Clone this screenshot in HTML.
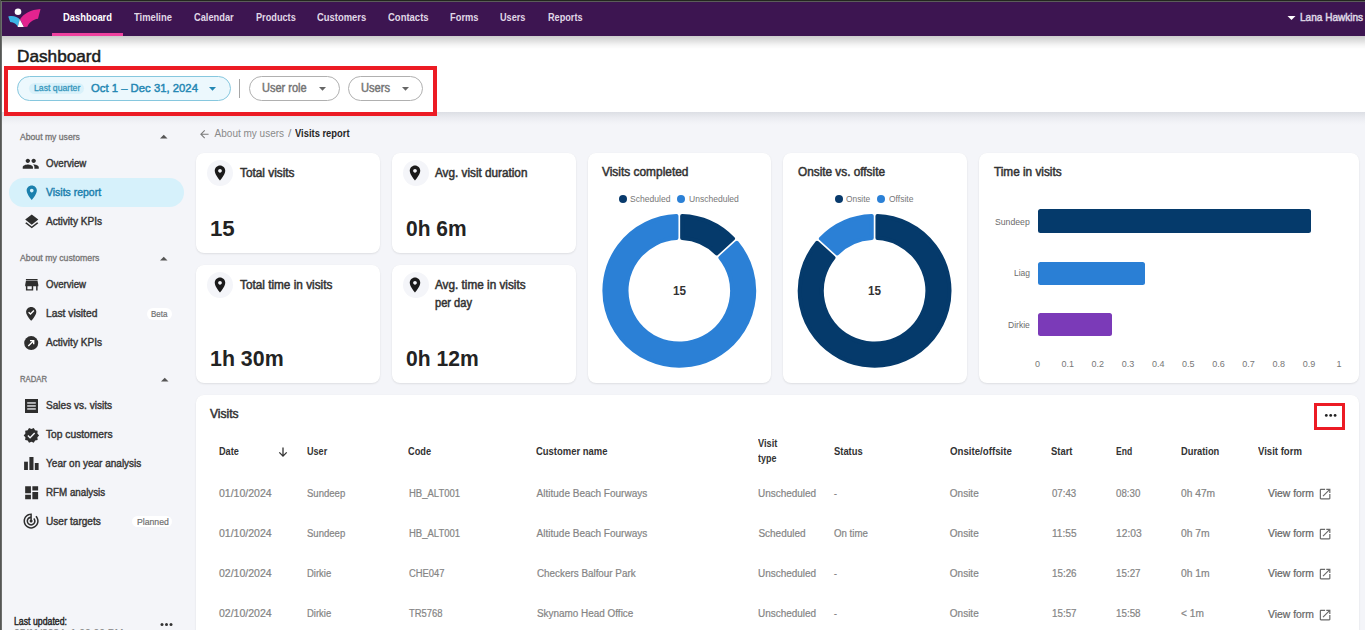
<!DOCTYPE html>
<html><head><meta charset="utf-8">
<style>
*{box-sizing:border-box;margin:0;padding:0}
html,body{width:1365px;height:630px;overflow:hidden}
body{position:relative;background:#f4f5f9;font-family:"Liberation Sans",sans-serif;color:#222}
.a{position:absolute}
.tx{position:absolute;white-space:nowrap;line-height:normal;transform-origin:0 0;z-index:20}
.card{position:absolute;background:#fff;border-radius:8px;box-shadow:0 1px 2px rgba(0,0,0,.09),0 0 1px rgba(0,0,0,.04)}
.circ{position:absolute;width:26px;height:26px;border-radius:50%;background:#f4f5f9}
.ic{position:absolute;z-index:21}
.pill{position:absolute;top:76px;height:25px;border-radius:13px;border:1.2px solid #b0b0b0;background:#fff;z-index:3}
svg{display:block}
</style></head><body>
<!-- frame borders -->
<div class="a" style="left:0;top:0;width:1365px;height:1px;background:#23261f;z-index:60"></div>
<div class="a" style="left:0;top:1px;width:1365px;height:1px;background:#5b5d59;z-index:60"></div>
<div class="a" style="left:0;top:0;width:1px;height:630px;background:#555654;z-index:61"></div>
<div class="a" style="left:1px;top:1px;width:1px;height:629px;background:#6b6d6b;z-index:61"></div>

<!-- header -->
<div class="a" style="left:2px;top:2px;width:1363px;height:34px;background:#3d1551;z-index:5"></div>
<div class="a" style="left:52px;top:33px;width:71px;height:3px;background:#f0409f;z-index:6"></div>
<svg class="a" style="left:4px;top:4px;z-index:6" width="40" height="28" viewBox="0 0 900 630">
 <circle cx="315" cy="175" r="75" fill="#ffffff"/>
 <path d="M95,280 C200,250 300,285 355,345 L310,512 C285,455 225,410 140,405 Z" fill="#3db5e6"/>
 <path d="M360,345 C450,215 600,130 822,115 L765,330 C650,345 565,415 525,512 L450,520 Z" fill="#e3238f"/>
 <path d="M355,345 L308,515 L447,515 Z" fill="#ffffff"/>
</svg>
<svg class="a" style="left:1287px;top:15px;z-index:6" width="9" height="6" viewBox="0 0 9 6"><path d="M0.5,1 L8.5,1 L4.5,5 Z" fill="#fff"/></svg>

<!-- white page header -->
<div class="a" style="left:2px;top:36px;width:1363px;height:76px;background:#fff;z-index:2"></div>
<div class="a" style="left:2px;top:36px;width:1363px;height:13px;background:linear-gradient(rgba(0,0,0,.20),rgba(0,0,0,.11) 40%,rgba(0,0,0,.04) 70%,rgba(0,0,0,0));z-index:4"></div>
<div class="a" style="left:2px;top:112px;width:1363px;height:13px;background:linear-gradient(rgba(30,40,60,.11),rgba(30,40,60,.05) 40%,rgba(30,40,60,.015) 75%,rgba(0,0,0,0));z-index:1"></div>
<div class="pill" style="left:17px;width:214px;border-color:#86c7de;background:#ecf8fd"></div>
<div class="a" style="left:29px;top:83px;width:55px;height:11px;border-radius:6px;background:#d9f1fa;z-index:4"></div>
<svg class="a" style="left:208px;top:86px;z-index:4" width="9" height="6" viewBox="0 0 9 6"><path d="M1,1 L8,1 L4.5,4.8 Z" fill="#2387b3"/></svg>
<div class="a" style="left:239.2px;top:78.5px;width:1.2px;height:19.5px;background:#a6a6a6;z-index:4"></div>
<div class="pill" style="left:249px;width:91px"></div>
<svg class="a" style="left:318px;top:86px;z-index:4" width="9" height="6" viewBox="0 0 9 6"><path d="M1,1 L8,1 L4.5,4.8 Z" fill="#666"/></svg>
<div class="pill" style="left:348px;width:75px"></div>
<svg class="a" style="left:400.5px;top:86px;z-index:4" width="9" height="6" viewBox="0 0 9 6"><path d="M1,1 L8,1 L4.5,4.8 Z" fill="#666"/></svg>
<div class="a" style="left:4px;top:66px;width:433px;height:50px;border:4px solid #ec1b24;z-index:30"></div>

<!-- sidebar -->
<div class="a" style="left:9px;top:178px;width:175px;height:29px;border-radius:15px;background:#d6f1fb"></div>
<svg class="a" style="left:160px;top:134px" width="8" height="5" viewBox="0 0 8 5"><path d="M0,4.5 L7.5,4.5 L3.75,0.8 Z" fill="#555"/></svg>
<svg class="a" style="left:160px;top:255.5px" width="8" height="5" viewBox="0 0 8 5"><path d="M0,4.5 L7.5,4.5 L3.75,0.8 Z" fill="#555"/></svg>
<svg class="a" style="left:160.5px;top:376.5px" width="8" height="5" viewBox="0 0 8 5"><path d="M0,4.5 L7.5,4.5 L3.75,0.8 Z" fill="#555"/></svg>
<div class="a" style="left:147px;top:308px;width:25px;height:12px;border-radius:6px;background:#fff"></div>
<div class="a" style="left:132px;top:516px;width:40px;height:11px;border-radius:6px;background:#fff"></div>
<svg class="a" style="left:160px;top:622px" width="14" height="5" viewBox="0 0 14 5"><circle cx="2" cy="2.5" r="1.5" fill="#333"/><circle cx="6.5" cy="2.5" r="1.5" fill="#333"/><circle cx="11" cy="2.5" r="1.5" fill="#333"/></svg>
<!-- sidebar icons -->
<svg class="ic" style="left:22.4px;top:155.2px" width="17.5" height="17.5" viewBox="0 0 24 24"><path fill="#2e2e2e" d="M16 11c1.66 0 2.99-1.34 2.99-3S17.66 5 16 5c-1.66 0-3 1.34-3 3s1.34 3 3 3zm-8 0c1.66 0 2.99-1.34 2.99-3S9.66 5 8 5C6.34 5 5 6.34 5 8s1.340 3 3 3zm0 2c-2.33 0-7 1.17-7 3.5V19h14v-2.5c0-2.33-4.67-3.5-7-3.5zm8 0c-.29 0-.62.02-.97.05 1.16.84 1.970 1.97 1.97 3.45V19h6v-2.5c0-2.33-4.67-3.5-7-3.5z"/></svg>
<svg class="ic" style="left:22.55px;top:184.3px" width="17.5" height="17.5" viewBox="0 0 24 24"><path fill="#1b80ad" d="M12 2C8.13 2 5 5.13 5 9c0 5.25 7 13 7 13s7-7.75 7-13c0-3.87-3.13-7-7-7zm0 9.5c-1.38 0-2.5-1.12-2.5-2.5s1.12-2.5 2.5-2.5 2.5 1.12 2.5 2.5-1.12 2.5-2.5 2.5z"/></svg>
<svg class="ic" style="left:22.6px;top:213px" width="17.5" height="17.5" viewBox="0 0 24 24"><path fill="#2e2e2e" d="M11.99 18.54l-7.37-5.730L3 14.07l9 7 9-7-1.63-1.27-7.38 5.74zM12 16l7.36-5.73L21 9l-9-7-9 7 1.63 1.27L12 16z"/></svg>
<svg class="ic" style="left:22.6px;top:276.1px" width="17.5" height="17.5" viewBox="0 0 24 24"><path fill="#2e2e2e" d="M20 4H4v2h16V4zm1 10v-2l-1-5H4l-1 5v2h1v6h10v-6h4v6h2v-6h1zm-9 4H6v-4h6v4z"/></svg>
<svg class="ic" style="left:24px;top:305px" width="15" height="18" viewBox="0 0 15 18"><path fill="#2e2e2e" d="M7.2,2 C4.3,2 2.1,4.2 2.1,7 C2.1,10.5 7.2,15.8 7.2,15.8 C7.2,15.8 12.3,10.5 12.3,7 C12.3,4.2 10.1,2 7.2,2 Z"/><path d="M4.6,7.2 L6.5,9 L9.9,5.6" stroke="#fff" stroke-width="1.4" fill="none"/></svg>
<svg class="ic" style="left:24px;top:335.5px" width="15" height="15" viewBox="0 0 15 15"><circle cx="7.2" cy="7.1" r="7" fill="#2e2e2e"/><path d="M4.3,10 L9.6,4.7 M6,4.6 L9.7,4.6 L9.7,8.3" stroke="#fff" stroke-width="1.4" fill="none"/></svg>
<svg class="ic" style="left:25px;top:399.2px" width="13" height="14" viewBox="0 0 13 14"><rect x="0" y="0" width="13" height="14" fill="#2e2e2e"/><rect x="2.2" y="3.3" width="8.6" height="1.3" fill="#f3f4f8"/><rect x="2.2" y="6.3" width="8.6" height="1.3" fill="#f3f4f8"/><rect x="2.2" y="9.3" width="8.6" height="1.3" fill="#f3f4f8"/></svg>
<svg class="ic" style="left:22.9px;top:426.6px" width="16.8" height="16.8" viewBox="0 0 24 24"><path fill="#2e2e2e" d="M23 12l-2.44-2.79.34-3.69-3.61-.82-1.89-3.2L12 2.96 8.6 1.5 6.71 4.69 3.1 5.5l.34 3.7L1 12l2.44 2.79-.34 3.7 3.61.82L8.6 22.5l3.4-1.47 3.4 1.46 1.89-3.19 3.61-.82-.34-3.69L23 12zm-12.91 4.72l-3.8-3.81 1.48-1.48 2.32 2.33 5.85-5.87 1.48 1.48-7.330 7.35z"/></svg>
<svg class="ic" style="left:24px;top:457px" width="15" height="13" viewBox="0 0 15 13"><rect x="0.1" y="4.7" width="3.8" height="8.3" fill="#2e2e2e"/><rect x="5.4" y="0" width="4.1" height="13" fill="#2e2e2e"/><rect x="10.8" y="6" width="3.8" height="7" fill="#2e2e2e"/></svg>
<svg class="ic" style="left:22.6px;top:484.2px" width="17.3" height="17.3" viewBox="0 0 24 24"><path fill="#2e2e2e" d="M3 13h8V3H3v10zm0 8h8v-6H3v6zm10 0h8V11h-8v10zm0-18v6h8V3h-8z"/></svg>
<svg class="ic" style="left:22.3px;top:512.2px" width="18.2" height="18.2" viewBox="0 0 24 24"><path fill="#2e2e2e" d="M19.07 4.93l-1.41 1.41C19.1 7.79 20 9.79 20 12c0 4.42-3.58 8-8 8s-8-3.58-8-8c0-4.08 3.050-7.44 7-7.93v2.02C8.16 6.57 6 9.03 6 12c0 3.31 2.69 6 6 6s6-2.690 6-6c0-1.66-.67-3.16-1.76-4.24l-1.41 1.41C15.55 9.9 16 10.9 16 12c0 2.21-1.79 4-4 4s-4-1.79-4-4c0-1.86 1.28-3.41 3-3.86v2.14c-.6.35-1 .98-1 1.72 0 1.1.9 2 2 2s2-.9 2-2c0-.74-.4-1.38-1-1.72V2h-1C6.48 2 2 6.48 2 12s4.48 10 10 10 10-4.48 10-10c0-2.76-1.12-5.26-2.93-7.07z"/></svg>

<!-- breadcrumb arrow -->
<svg class="ic" style="left:198.3px;top:127.8px" width="12.7" height="12.7" viewBox="0 0 24 24"><path fill="#7a7a7a" d="M20 11H7.83l5.59-5.59L12 4l-8 8 8 8 1.41-1.41L7.83 13H20v-2z"/></svg>

<!-- cards -->
<div class="card" style="left:196px;top:153px;width:184px;height:100px"></div>
<div class="card" style="left:392px;top:153px;width:184px;height:100px"></div>
<div class="card" style="left:196px;top:265px;width:184px;height:117.5px"></div>
<div class="card" style="left:392px;top:265px;width:184px;height:117.5px"></div>
<div class="card" style="left:588px;top:153px;width:183px;height:229.5px"></div>
<div class="card" style="left:783px;top:153px;width:184px;height:229.5px"></div>
<div class="card" style="left:979px;top:153px;width:380px;height:229.5px"></div>
<div class="card" style="left:196px;top:395px;width:1163px;height:260px"></div>

<div class="circ" style="left:207px;top:160px"></div>
<div class="circ" style="left:403px;top:160px"></div>
<div class="circ" style="left:207px;top:272px"></div>
<div class="circ" style="left:403px;top:272px"></div>
<svg class="ic" style="left:210.55px;top:163.6px" width="18" height="18" viewBox="0 0 24 24"><path fill="#1a1a1a" d="M12 2C8.13 2 5 5.13 5 9c0 5.25 7 13 7 13s7-7.75 7-13c0-3.87-3.13-7-7-7zm0 9.5c-1.38 0-2.5-1.12-2.5-2.5s1.12-2.5 2.5-2.5 2.5 1.12 2.5 2.5-1.12 2.5-2.5 2.5z"/></svg><svg class="ic" style="left:406.3px;top:163.6px" width="18" height="18" viewBox="0 0 24 24"><path fill="#1a1a1a" d="M12 2C8.13 2 5 5.13 5 9c0 5.25 7 13 7 13s7-7.75 7-13c0-3.87-3.13-7-7-7zm0 9.5c-1.38 0-2.5-1.12-2.5-2.5s1.12-2.5 2.5-2.5 2.5 1.12 2.5 2.5-1.12 2.5-2.5 2.5z"/></svg><svg class="ic" style="left:210.55px;top:275.8px" width="18" height="18" viewBox="0 0 24 24"><path fill="#1a1a1a" d="M12 2C8.13 2 5 5.13 5 9c0 5.25 7 13 7 13s7-7.75 7-13c0-3.87-3.13-7-7-7zm0 9.5c-1.38 0-2.5-1.12-2.5-2.5s1.12-2.5 2.5-2.5 2.5 1.12 2.5 2.5-1.12 2.5-2.5 2.5z"/></svg><svg class="ic" style="left:406.3px;top:275.8px" width="18" height="18" viewBox="0 0 24 24"><path fill="#1a1a1a" d="M12 2C8.13 2 5 5.13 5 9c0 5.25 7 13 7 13s7-7.75 7-13c0-3.87-3.13-7-7-7zm0 9.5c-1.38 0-2.5-1.12-2.5-2.5s1.12-2.5 2.5-2.5 2.5 1.12 2.5 2.5-1.12 2.5-2.5 2.5z"/></svg>
<svg class="a" style="left:590px;top:205px;z-index:5" width="380" height="175"><path d="M92.15,10.95 A74.90,74.90 0 0 1 143.01,33.60 L126.57,48.40 A52.80,52.80 0 0 0 92.15,33.08 Z" fill="#053a6b" stroke="#053a6b" stroke-width="4.0" stroke-linejoin="round"/><path d="M146.83,37.84 A74.90,74.90 0 1 1 86.45,10.95 L86.45,33.08 A52.80,52.80 0 1 0 130.39,52.64 Z" fill="#2b80d6" stroke="#2b80d6" stroke-width="4.0" stroke-linejoin="round"/><path d="M287.45,10.95 A74.90,74.90 0 1 1 227.07,37.84 L243.51,52.64 A52.80,52.80 0 1 0 287.45,33.08 Z" fill="#053a6b" stroke="#053a6b" stroke-width="4.0" stroke-linejoin="round"/><path d="M230.89,33.60 A74.90,74.90 0 0 1 281.75,10.95 L281.75,33.08 A52.80,52.80 0 0 0 247.33,48.40 Z" fill="#2b80d6" stroke="#2b80d6" stroke-width="4.0" stroke-linejoin="round"/></svg>

<!-- legend dots -->
<div class="a" style="left:618.7px;top:195.2px;width:8px;height:8px;border-radius:50%;background:#083a6c;z-index:5"></div>
<div class="a" style="left:676.7px;top:195.2px;width:8px;height:8px;border-radius:50%;background:#2b80d6;z-index:5"></div>
<div class="a" style="left:834.8px;top:195.2px;width:8px;height:8px;border-radius:50%;background:#083a6c;z-index:5"></div>
<div class="a" style="left:877px;top:195.2px;width:8px;height:8px;border-radius:50%;background:#2b80d6;z-index:5"></div>

<!-- bars -->
<div class="a" style="left:1038.3px;top:209.3px;width:273px;height:23.4px;border-radius:2.5px;background:#053a6b;z-index:5"></div>
<div class="a" style="left:1038.3px;top:261.5px;width:107.2px;height:23.2px;border-radius:2.5px;background:#2a7fd5;z-index:5"></div>
<div class="a" style="left:1038.4px;top:313.4px;width:73.6px;height:23.1px;border-radius:2.5px;background:#7b3ab8;z-index:5"></div>

<!-- visits card extras -->
<div class="a" style="left:1314px;top:403px;width:31px;height:26.5px;border:3px solid #ec1b24;z-index:30"></div>
<svg class="a" style="left:1323.5px;top:412.5px;z-index:31" width="14" height="5" viewBox="0 0 14 5"><circle cx="2.3" cy="2.4" r="1.4" fill="#222"/><circle cx="6.7" cy="2.4" r="1.4" fill="#222"/><circle cx="11.1" cy="2.4" r="1.4" fill="#222"/></svg>
<svg class="ic" style="left:276.5px;top:445.5px" width="12" height="12" viewBox="0 0 12 12"><path d="M6,1.5 L6,10 M2.3,6.4 L6,10.1 L9.7,6.4" stroke="#333" stroke-width="1.3" fill="none"/></svg>
<svg class="ic" style="left:1318px;top:487.0px" width="14.2" height="14.2" viewBox="0 0 24 24"><path fill="#6a6a6a" d="M19 19H5V5h7V3H5c-1.11 0-2 .9-2 2v14c0 1.1.89 2 2 2h14c1.1 0 2-.9 2-2v-7h-2v7zM14 3v2h3.59l-9.83 9.83 1.41 1.41L19 6.41V10h2V3h-7z"/></svg><svg class="ic" style="left:1318px;top:527.2px" width="14.2" height="14.2" viewBox="0 0 24 24"><path fill="#6a6a6a" d="M19 19H5V5h7V3H5c-1.11 0-2 .9-2 2v14c0 1.1.89 2 2 2h14c1.1 0 2-.9 2-2v-7h-2v7zM14 3v2h3.59l-9.83 9.83 1.41 1.41L19 6.41V10h2V3h-7z"/></svg><svg class="ic" style="left:1318px;top:567.4px" width="14.2" height="14.2" viewBox="0 0 24 24"><path fill="#6a6a6a" d="M19 19H5V5h7V3H5c-1.11 0-2 .9-2 2v14c0 1.1.89 2 2 2h14c1.1 0 2-.9 2-2v-7h-2v7zM14 3v2h3.59l-9.83 9.83 1.41 1.41L19 6.41V10h2V3h-7z"/></svg><svg class="ic" style="left:1318px;top:607.6px" width="14.2" height="14.2" viewBox="0 0 24 24"><path fill="#6a6a6a" d="M19 19H5V5h7V3H5c-1.11 0-2 .9-2 2v14c0 1.1.89 2 2 2h14c1.1 0 2-.9 2-2v-7h-2v7zM14 3v2h3.59l-9.83 9.83 1.41 1.41L19 6.41V10h2V3h-7z"/></svg>

<div class="tx" style="left:63.40px;top:10.70px;font-size:10.5px;font-weight:bold;color:#ffffff;transform:scaleX(0.893);">Dashboard</div>
<div class="tx" style="left:133.90px;top:10.70px;font-size:10.5px;font-weight:bold;color:#e0d8e7;transform:scaleX(0.895);">Timeline</div>
<div class="tx" style="left:194.00px;top:10.70px;font-size:10.5px;font-weight:bold;color:#e0d8e7;transform:scaleX(0.883);">Calendar</div>
<div class="tx" style="left:255.50px;top:10.70px;font-size:10.5px;font-weight:bold;color:#e0d8e7;transform:scaleX(0.874);">Products</div>
<div class="tx" style="left:317.10px;top:10.70px;font-size:10.5px;font-weight:bold;color:#e0d8e7;transform:scaleX(0.896);">Customers</div>
<div class="tx" style="left:387.90px;top:10.70px;font-size:10.5px;font-weight:bold;color:#e0d8e7;transform:scaleX(0.903);">Contacts</div>
<div class="tx" style="left:450.10px;top:10.70px;font-size:10.5px;font-weight:bold;color:#e0d8e7;transform:scaleX(0.887);">Forms</div>
<div class="tx" style="left:500.40px;top:10.70px;font-size:10.5px;font-weight:bold;color:#e0d8e7;transform:scaleX(0.872);">Users</div>
<div class="tx" style="left:547.70px;top:10.70px;font-size:10.5px;font-weight:bold;color:#e0d8e7;transform:scaleX(0.871);">Reports</div>
<div class="tx" style="left:1300.20px;top:10.70px;font-size:10.5px;font-weight:normal;color:#ddd5e3;-webkit-text-stroke:0.5px #ddd5e3;transform:scaleX(0.957);">Lana Hawkins</div>
<div class="tx" style="left:16.89px;top:46.60px;font-size:17px;font-weight:normal;color:#1c1c1c;-webkit-text-stroke:0.5px #1c1c1c;transform:scaleX(1.012);">Dashboard</div>
<div class="tx" style="left:33.60px;top:82.30px;font-size:9.5px;font-weight:normal;color:#3797bd;-webkit-text-stroke:0.3px #3797bd;transform:scaleX(0.914);">Last quarter</div>
<div class="tx" style="left:90.90px;top:80.90px;font-size:11.6px;font-weight:normal;color:#2387b3;-webkit-text-stroke:0.45px #2387b3;transform:scaleX(0.976);">Oct 1 – Dec 31, 2024</div>
<div class="tx" style="left:261.70px;top:80.90px;font-size:12px;font-weight:normal;color:#747474;-webkit-text-stroke:0.45px #747474;transform:scaleX(0.918);">User role</div>
<div class="tx" style="left:360.60px;top:80.90px;font-size:12px;font-weight:normal;color:#747474;-webkit-text-stroke:0.45px #747474;transform:scaleX(0.929);">Users</div>
<div class="tx" style="left:20.00px;top:131.70px;font-size:9px;font-weight:normal;color:#747474;-webkit-text-stroke:0.3px #747474;transform:scaleX(0.958);">About my users</div>
<div class="tx" style="left:45.80px;top:158.10px;font-size:10px;font-weight:normal;color:#363636;-webkit-text-stroke:0.4px #363636;transform:scaleX(0.966);">Overview</div>
<div class="tx" style="left:45.80px;top:186.90px;font-size:10px;font-weight:normal;color:#1b80ad;-webkit-text-stroke:0.4px #1b80ad;transform:scaleX(1.047);">Visits report</div>
<div class="tx" style="left:46.40px;top:215.60px;font-size:10px;font-weight:normal;color:#363636;-webkit-text-stroke:0.4px #363636;transform:scaleX(1.008);">Activity KPIs</div>
<div class="tx" style="left:20.00px;top:253.10px;font-size:9px;font-weight:normal;color:#747474;-webkit-text-stroke:0.3px #747474;transform:scaleX(0.969);">About my customers</div>
<div class="tx" style="left:46.10px;top:279.10px;font-size:10px;font-weight:normal;color:#363636;-webkit-text-stroke:0.4px #363636;transform:scaleX(0.959);">Overview</div>
<div class="tx" style="left:46.10px;top:307.90px;font-size:10px;font-weight:normal;color:#363636;-webkit-text-stroke:0.4px #363636;transform:scaleX(1.027);">Last visited</div>
<div class="tx" style="left:151.00px;top:307.90px;font-size:9.6px;font-weight:normal;color:#6f6f6f;-webkit-text-stroke:0.2px #6f6f6f;transform:scaleX(0.833);">Beta</div>
<div class="tx" style="left:46.10px;top:336.90px;font-size:10px;font-weight:normal;color:#363636;-webkit-text-stroke:0.4px #363636;transform:scaleX(1.008);">Activity KPIs</div>
<div class="tx" style="left:20.00px;top:374.00px;font-size:9px;font-weight:normal;color:#747474;-webkit-text-stroke:0.3px #747474;transform:scaleX(0.859);">RADAR</div>
<div class="tx" style="left:46.10px;top:400.00px;font-size:10px;font-weight:normal;color:#363636;-webkit-text-stroke:0.4px #363636;transform:scaleX(1.007);">Sales vs. visits</div>
<div class="tx" style="left:46.10px;top:428.80px;font-size:10px;font-weight:normal;color:#363636;-webkit-text-stroke:0.4px #363636;transform:scaleX(1.023);">Top customers</div>
<div class="tx" style="left:46.10px;top:457.60px;font-size:10px;font-weight:normal;color:#363636;-webkit-text-stroke:0.4px #363636;">Year on year analysis</div>
<div class="tx" style="left:46.00px;top:487.10px;font-size:10px;font-weight:normal;color:#363636;-webkit-text-stroke:0.4px #363636;transform:scaleX(0.977);">RFM analysis</div>
<div class="tx" style="left:46.00px;top:515.60px;font-size:10px;font-weight:normal;color:#363636;-webkit-text-stroke:0.4px #363636;transform:scaleX(1.006);">User targets</div>
<div class="tx" style="left:136.50px;top:515.60px;font-size:9.6px;font-weight:normal;color:#6f6f6f;-webkit-text-stroke:0.2px #6f6f6f;transform:scaleX(0.903);">Planned</div>
<div class="tx" style="left:14.20px;top:616.20px;font-size:10px;font-weight:normal;color:#222222;-webkit-text-stroke:0.4px #222222;transform:scaleX(0.874);">Last updated:</div>
<div class="tx" style="left:14.20px;top:627.60px;font-size:10px;font-weight:normal;color:#8a8a8a;-webkit-text-stroke:0.2px #8a8a8a;transform:scaleX(1.031);">05/11/2024, 1:00:00 PM</div>
<div class="tx" style="left:214.60px;top:127.80px;font-size:10px;font-weight:normal;color:#8a8a8a;">About my users</div>
<div class="tx" style="left:287.50px;top:127.80px;font-size:10px;font-weight:normal;color:#8a8a8a;transform:scaleX(1.200);">/</div>
<div class="tx" style="left:294.80px;top:127.80px;font-size:10px;font-weight:bold;color:#262626;transform:scaleX(0.938);">Visits report</div>
<div class="tx" style="left:239.80px;top:165.50px;font-size:12px;font-weight:normal;color:#333333;-webkit-text-stroke:0.5px #333333;transform:scaleX(0.985);">Total visits</div>
<div class="tx" style="left:209.99px;top:216.10px;font-size:22px;font-weight:bold;color:#232323;transform:scaleX(1.011);">15</div>
<div class="tx" style="left:434.90px;top:165.70px;font-size:12px;font-weight:normal;color:#333333;-webkit-text-stroke:0.5px #333333;transform:scaleX(0.978);">Avg. visit duration</div>
<div class="tx" style="left:406.20px;top:216.00px;font-size:22px;font-weight:bold;color:#232323;transform:scaleX(0.952);">0h 6m</div>
<div class="tx" style="left:239.60px;top:278.10px;font-size:12px;font-weight:normal;color:#333333;-webkit-text-stroke:0.5px #333333;transform:scaleX(0.982);">Total time in visits</div>
<div class="tx" style="left:210.03px;top:346.20px;font-size:22px;font-weight:bold;color:#232323;transform:scaleX(0.971);">1h 30m</div>
<div class="tx" style="left:434.80px;top:278.10px;font-size:12px;font-weight:normal;color:#333333;-webkit-text-stroke:0.5px #333333;transform:scaleX(0.979);">Avg. time in visits</div>
<div class="tx" style="left:434.80px;top:295.60px;font-size:12px;font-weight:normal;color:#333333;-webkit-text-stroke:0.5px #333333;transform:scaleX(0.924);">per day</div>
<div class="tx" style="left:406.30px;top:346.20px;font-size:22px;font-weight:bold;color:#232323;transform:scaleX(0.958);">0h 12m</div>
<div class="tx" style="left:602.10px;top:165.40px;font-size:12px;font-weight:normal;color:#333333;-webkit-text-stroke:0.5px #333333;transform:scaleX(0.992);">Visits completed</div>
<div class="tx" style="left:630.20px;top:193.80px;font-size:9px;font-weight:normal;color:#777777;transform:scaleX(0.952);">Scheduled</div>
<div class="tx" style="left:688.60px;top:193.80px;font-size:9px;font-weight:normal;color:#777777;transform:scaleX(0.948);">Unscheduled</div>
<div class="tx" style="left:673.00px;top:282.80px;font-size:13.6px;font-weight:bold;color:#333333;transform:scaleX(0.861);">15</div>
<div class="tx" style="left:797.50px;top:165.40px;font-size:12px;font-weight:normal;color:#333333;-webkit-text-stroke:0.5px #333333;transform:scaleX(0.983);">Onsite vs. offsite</div>
<div class="tx" style="left:846.30px;top:193.80px;font-size:9px;font-weight:normal;color:#777777;transform:scaleX(0.931);">Onsite</div>
<div class="tx" style="left:888.50px;top:193.80px;font-size:9px;font-weight:normal;color:#777777;transform:scaleX(0.944);">Offsite</div>
<div class="tx" style="left:867.60px;top:282.80px;font-size:13.6px;font-weight:bold;color:#333333;transform:scaleX(0.861);">15</div>
<div class="tx" style="left:993.90px;top:165.40px;font-size:12px;font-weight:normal;color:#333333;-webkit-text-stroke:0.5px #333333;transform:scaleX(0.981);">Time in visits</div>
<div class="tx" style="left:995.00px;top:216.50px;font-size:9px;font-weight:normal;color:#6c6c6c;transform:scaleX(0.963);">Sundeep</div>
<div class="tx" style="left:1013.70px;top:268.00px;font-size:9px;font-weight:normal;color:#6c6c6c;transform:scaleX(0.941);">Liag</div>
<div class="tx" style="left:1007.60px;top:320.00px;font-size:9px;font-weight:normal;color:#6c6c6c;transform:scaleX(0.948);">Dirkie</div>
<div class="tx" style="left:1035.00px;top:359.20px;font-size:9px;font-weight:normal;color:#777777;">0</div>
<div class="tx" style="left:1061.41px;top:359.20px;font-size:9px;font-weight:normal;color:#777777;">0.1</div>
<div class="tx" style="left:1091.57px;top:359.20px;font-size:9px;font-weight:normal;color:#777777;">0.2</div>
<div class="tx" style="left:1121.73px;top:359.20px;font-size:9px;font-weight:normal;color:#777777;">0.3</div>
<div class="tx" style="left:1151.89px;top:359.20px;font-size:9px;font-weight:normal;color:#777777;">0.4</div>
<div class="tx" style="left:1182.05px;top:359.20px;font-size:9px;font-weight:normal;color:#777777;">0.5</div>
<div class="tx" style="left:1212.21px;top:359.20px;font-size:9px;font-weight:normal;color:#777777;">0.6</div>
<div class="tx" style="left:1242.37px;top:359.20px;font-size:9px;font-weight:normal;color:#777777;">0.7</div>
<div class="tx" style="left:1272.53px;top:359.20px;font-size:9px;font-weight:normal;color:#777777;">0.8</div>
<div class="tx" style="left:1302.69px;top:359.20px;font-size:9px;font-weight:normal;color:#777777;">0.9</div>
<div class="tx" style="left:1336.60px;top:359.20px;font-size:9px;font-weight:normal;color:#777777;">1</div>
<div class="tx" style="left:210.20px;top:407.30px;font-size:12px;font-weight:normal;color:#333333;-webkit-text-stroke:0.5px #333333;transform:scaleX(1.005);">Visits</div>
<div class="tx" style="left:218.80px;top:445.50px;font-size:10px;font-weight:bold;color:#333333;transform:scaleX(0.913);">Date</div>
<div class="tx" style="left:306.70px;top:445.50px;font-size:10px;font-weight:bold;color:#333333;transform:scaleX(0.908);">User</div>
<div class="tx" style="left:407.90px;top:445.50px;font-size:10px;font-weight:bold;color:#333333;transform:scaleX(0.924);">Code</div>
<div class="tx" style="left:536.00px;top:445.50px;font-size:10px;font-weight:bold;color:#333333;transform:scaleX(0.946);">Customer name</div>
<div class="tx" style="left:757.80px;top:438.40px;font-size:10px;font-weight:bold;color:#333333;transform:scaleX(0.926);">Visit</div>
<div class="tx" style="left:757.80px;top:452.80px;font-size:10px;font-weight:bold;color:#333333;transform:scaleX(0.895);">type</div>
<div class="tx" style="left:834.00px;top:445.50px;font-size:10px;font-weight:bold;color:#333333;transform:scaleX(0.939);">Status</div>
<div class="tx" style="left:949.60px;top:445.50px;font-size:10px;font-weight:bold;color:#333333;transform:scaleX(0.967);">Onsite/offsite</div>
<div class="tx" style="left:1051.20px;top:445.50px;font-size:10px;font-weight:bold;color:#333333;transform:scaleX(0.942);">Start</div>
<div class="tx" style="left:1115.90px;top:445.50px;font-size:10px;font-weight:bold;color:#333333;transform:scaleX(0.857);">End</div>
<div class="tx" style="left:1180.60px;top:445.50px;font-size:10px;font-weight:bold;color:#333333;transform:scaleX(0.932);">Duration</div>
<div class="tx" style="left:1258.30px;top:445.50px;font-size:10px;font-weight:bold;color:#333333;transform:scaleX(0.956);">Visit form</div>
<div class="tx" style="left:219.40px;top:487.50px;font-size:10px;font-weight:normal;color:#858585;-webkit-text-stroke:0.2px #858585;transform:scaleX(1.052);">01/10/2024</div>
<div class="tx" style="left:307.20px;top:487.50px;font-size:10px;font-weight:normal;color:#858585;-webkit-text-stroke:0.2px #858585;transform:scaleX(0.954);">Sundeep</div>
<div class="tx" style="left:408.60px;top:487.50px;font-size:10px;font-weight:normal;color:#858585;-webkit-text-stroke:0.2px #858585;transform:scaleX(0.951);">HB_ALT001</div>
<div class="tx" style="left:536.60px;top:487.50px;font-size:10px;font-weight:normal;color:#858585;-webkit-text-stroke:0.2px #858585;">Altitude Beach Fourways</div>
<div class="tx" style="left:758.40px;top:487.50px;font-size:10px;font-weight:normal;color:#858585;-webkit-text-stroke:0.2px #858585;transform:scaleX(0.995);">Unscheduled</div>
<div class="tx" style="left:834.40px;top:487.50px;font-size:10px;font-weight:normal;color:#858585;-webkit-text-stroke:0.2px #858585;transform:scaleX(0.867);">-</div>
<div class="tx" style="left:949.80px;top:487.50px;font-size:10px;font-weight:normal;color:#858585;-webkit-text-stroke:0.2px #858585;">Onsite</div>
<div class="tx" style="left:1051.60px;top:487.50px;font-size:10px;font-weight:normal;color:#858585;-webkit-text-stroke:0.2px #858585;transform:scaleX(0.966);">07:43</div>
<div class="tx" style="left:1116.20px;top:487.50px;font-size:10px;font-weight:normal;color:#858585;-webkit-text-stroke:0.2px #858585;transform:scaleX(0.970);">08:30</div>
<div class="tx" style="left:1181.00px;top:487.50px;font-size:10px;font-weight:normal;color:#858585;-webkit-text-stroke:0.2px #858585;transform:scaleX(1.023);">0h 47m</div>
<div class="tx" style="left:1268.00px;top:488.00px;font-size:10px;font-weight:normal;color:#666666;-webkit-text-stroke:0.2px #666666;transform:scaleX(1.038);">View form</div>
<div class="tx" style="left:219.40px;top:527.70px;font-size:10px;font-weight:normal;color:#858585;-webkit-text-stroke:0.2px #858585;transform:scaleX(1.052);">01/10/2024</div>
<div class="tx" style="left:307.20px;top:527.70px;font-size:10px;font-weight:normal;color:#858585;-webkit-text-stroke:0.2px #858585;transform:scaleX(0.954);">Sundeep</div>
<div class="tx" style="left:408.60px;top:527.70px;font-size:10px;font-weight:normal;color:#858585;-webkit-text-stroke:0.2px #858585;transform:scaleX(0.951);">HB_ALT001</div>
<div class="tx" style="left:536.60px;top:527.70px;font-size:10px;font-weight:normal;color:#858585;-webkit-text-stroke:0.2px #858585;">Altitude Beach Fourways</div>
<div class="tx" style="left:758.40px;top:527.70px;font-size:10px;font-weight:normal;color:#858585;-webkit-text-stroke:0.2px #858585;">Scheduled</div>
<div class="tx" style="left:834.40px;top:527.70px;font-size:10px;font-weight:normal;color:#858585;-webkit-text-stroke:0.2px #858585;transform:scaleX(0.968);">On time</div>
<div class="tx" style="left:949.80px;top:527.70px;font-size:10px;font-weight:normal;color:#858585;-webkit-text-stroke:0.2px #858585;">Onsite</div>
<div class="tx" style="left:1051.60px;top:527.70px;font-size:10px;font-weight:normal;color:#858585;-webkit-text-stroke:0.2px #858585;transform:scaleX(1.011);">11:55</div>
<div class="tx" style="left:1116.20px;top:527.70px;font-size:10px;font-weight:normal;color:#858585;-webkit-text-stroke:0.2px #858585;transform:scaleX(1.025);">12:03</div>
<div class="tx" style="left:1181.00px;top:527.70px;font-size:10px;font-weight:normal;color:#858585;-webkit-text-stroke:0.2px #858585;transform:scaleX(1.034);">0h 7m</div>
<div class="tx" style="left:1268.00px;top:528.20px;font-size:10px;font-weight:normal;color:#666666;-webkit-text-stroke:0.2px #666666;transform:scaleX(1.038);">View form</div>
<div class="tx" style="left:219.40px;top:567.90px;font-size:10px;font-weight:normal;color:#858585;-webkit-text-stroke:0.2px #858585;transform:scaleX(1.052);">02/10/2024</div>
<div class="tx" style="left:307.20px;top:567.90px;font-size:10px;font-weight:normal;color:#858585;-webkit-text-stroke:0.2px #858585;transform:scaleX(0.946);">Dirkie</div>
<div class="tx" style="left:408.60px;top:567.90px;font-size:10px;font-weight:normal;color:#858585;-webkit-text-stroke:0.2px #858585;transform:scaleX(0.939);">CHE047</div>
<div class="tx" style="left:536.60px;top:567.90px;font-size:10px;font-weight:normal;color:#858585;-webkit-text-stroke:0.2px #858585;transform:scaleX(0.986);">Checkers Balfour Park</div>
<div class="tx" style="left:758.40px;top:567.90px;font-size:10px;font-weight:normal;color:#858585;-webkit-text-stroke:0.2px #858585;transform:scaleX(0.995);">Unscheduled</div>
<div class="tx" style="left:834.40px;top:567.90px;font-size:10px;font-weight:normal;color:#858585;-webkit-text-stroke:0.2px #858585;transform:scaleX(0.867);">-</div>
<div class="tx" style="left:949.80px;top:567.90px;font-size:10px;font-weight:normal;color:#858585;-webkit-text-stroke:0.2px #858585;">Onsite</div>
<div class="tx" style="left:1051.60px;top:567.90px;font-size:10px;font-weight:normal;color:#858585;-webkit-text-stroke:0.2px #858585;transform:scaleX(0.982);">15:26</div>
<div class="tx" style="left:1116.20px;top:567.90px;font-size:10px;font-weight:normal;color:#858585;-webkit-text-stroke:0.2px #858585;transform:scaleX(0.982);">15:27</div>
<div class="tx" style="left:1181.00px;top:567.90px;font-size:10px;font-weight:normal;color:#858585;-webkit-text-stroke:0.2px #858585;transform:scaleX(1.034);">0h 1m</div>
<div class="tx" style="left:1268.00px;top:568.40px;font-size:10px;font-weight:normal;color:#666666;-webkit-text-stroke:0.2px #666666;transform:scaleX(1.038);">View form</div>
<div class="tx" style="left:219.40px;top:608.10px;font-size:10px;font-weight:normal;color:#858585;-webkit-text-stroke:0.2px #858585;transform:scaleX(1.052);">02/10/2024</div>
<div class="tx" style="left:307.20px;top:608.10px;font-size:10px;font-weight:normal;color:#858585;-webkit-text-stroke:0.2px #858585;transform:scaleX(0.946);">Dirkie</div>
<div class="tx" style="left:408.60px;top:608.10px;font-size:10px;font-weight:normal;color:#858585;-webkit-text-stroke:0.2px #858585;transform:scaleX(0.944);">TR5768</div>
<div class="tx" style="left:536.60px;top:608.10px;font-size:10px;font-weight:normal;color:#858585;-webkit-text-stroke:0.2px #858585;transform:scaleX(0.992);">Skynamo Head Office</div>
<div class="tx" style="left:758.40px;top:608.10px;font-size:10px;font-weight:normal;color:#858585;-webkit-text-stroke:0.2px #858585;transform:scaleX(0.995);">Unscheduled</div>
<div class="tx" style="left:834.40px;top:608.10px;font-size:10px;font-weight:normal;color:#858585;-webkit-text-stroke:0.2px #858585;transform:scaleX(0.867);">-</div>
<div class="tx" style="left:949.80px;top:608.10px;font-size:10px;font-weight:normal;color:#858585;-webkit-text-stroke:0.2px #858585;">Onsite</div>
<div class="tx" style="left:1051.60px;top:608.10px;font-size:10px;font-weight:normal;color:#858585;-webkit-text-stroke:0.2px #858585;transform:scaleX(0.982);">15:57</div>
<div class="tx" style="left:1116.20px;top:608.10px;font-size:10px;font-weight:normal;color:#858585;-webkit-text-stroke:0.2px #858585;transform:scaleX(0.982);">15:58</div>
<div class="tx" style="left:1181.00px;top:608.10px;font-size:10px;font-weight:normal;color:#858585;-webkit-text-stroke:0.2px #858585;transform:scaleX(1.014);">&lt; 1m</div>
<div class="tx" style="left:1268.00px;top:608.60px;font-size:10px;font-weight:normal;color:#666666;-webkit-text-stroke:0.2px #666666;transform:scaleX(1.038);">View form</div>
</body></html>
